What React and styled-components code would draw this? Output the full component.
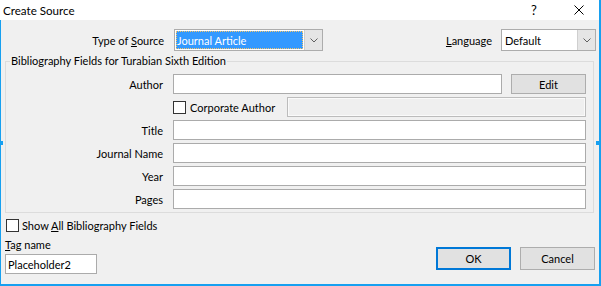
import React from "react";
import styled, { createGlobalStyle } from "styled-components";

const ACCENT = "#17a0f0";
const FONT = `Lato, "Liberation Sans", sans-serif`;

const Global = createGlobalStyle`
  html, body { margin: 0; padding: 0; background: #ffffff; }
  body { font-family: ${FONT}; }
  * { box-sizing: border-box; }
`;

const Window = styled.div`
  position: relative;
  width: 601px;
  height: 286px;
  display: flex;
  flex-direction: column;
  background: #f0f0f0;
  border-right: 2px solid ${ACCENT};
  border-bottom: 2px solid ${ACCENT};
  font-family: ${FONT};
  font-size: 11px;
  color: #000;
`;

const Handle = styled.div`
  position: absolute;
  top: 141px;
  ${(p) => (p.$side === "left" ? "left: 0;" : "right: 0;")}
  width: 3px;
  height: 4px;
  background: ${ACCENT};
`;

const TitleBar = styled.div`
  height: 20px;
  flex: none;
  display: flex;
  align-items: center;
  background: #ffffff;
  padding-left: 3px;
`;

const TitleText = styled.span`
  font-size: 11.6px;
  flex: 1;
`;

const TitleButtons = styled.div`
  display: flex;
  gap: 5px;
  height: 100%;
`;

const TitleButton = styled.div`
  width: 40px;
  height: 100%;
  display: flex;
  align-items: center;
  justify-content: center;
  font-size: 13px;
`;

const Body = styled.div`
  flex: 1;
  display: flex;
  flex-direction: column;
  border-left: 1px solid ${ACCENT};
  padding: 9px 0 10px 0;
`;

const TopRow = styled.div`
  display: flex;
  align-items: center;
  height: 22px;
  padding-right: 3px;
`;

const TypeLabel = styled.span`
  width: 163px;
  text-align: right;
  margin-right: 10px;
`;

const LangLabel = styled.span`
  margin-left: auto;
  margin-right: 9px;
`;

const Combo = styled.div`
  width: ${(p) => p.$w}px;
  height: 22px;
  display: flex;
  border: 1px solid #acacac;
  background: #ffffff;
`;

const ComboField = styled.div`
  flex: 1;
  display: flex;
  align-items: stretch;
  padding: 1px;
`;

const ComboValue = styled.div`
  flex: 1;
  display: flex;
  align-items: center;
  padding-left: ${(p) => (p.$selected ? 1 : 2)}px;
  background: ${(p) => (p.$selected ? "#3399ff" : "transparent")};
  color: ${(p) => (p.$selected ? "#ffffff" : "#000")};
  outline: ${(p) => (p.$selected ? "1px dotted #f5c469" : "none")};
  outline-offset: -1px;
`;

const DropButton = styled.div`
  width: 18px;
  display: flex;
  align-items: center;
  justify-content: center;
  background: #e5e5e5;
  border-left: 1px solid #cfcfcf;
`;

const Chevron = () => (
  <svg width="8" height="5" viewBox="0 0 8 5">
    <path d="M0.5 0.5 L4 4 L7.5 0.5" fill="none" stroke="#606060" strokeWidth="1" />
  </svg>
);

const Group = styled.fieldset`
  margin: 3px 5px 0 4px;
  padding: 6px 7px 3px 0;
  border: 1px solid #dcdcdc;
  min-width: 0;
`;

const Legend = styled.legend`
  margin-left: 4px;
  padding: 0 1px;
  line-height: 14px;
`;

const FieldGrid = styled.div`
  display: grid;
  grid-template-columns: 157px 1fr;
  column-gap: 10px;
  row-gap: 3px;
  grid-auto-rows: 20px;
  align-items: center;
`;

const FieldLabel = styled.span`
  text-align: right;
`;

const TextBox = styled.div`
  height: 20px;
  ${(p) => (p.$w ? `width: ${p.$w}px;` : "flex: 1;")}
  border: 1px solid ${(p) => (p.$disabled ? "#bcbcbc" : "#ababab")};
  background: ${(p) => (p.$disabled ? "#efefef" : "#ffffff")};
  box-shadow: ${(p) => (p.$disabled ? "inset 0 0 0 1px #fafafa" : "none")};
  display: flex;
  align-items: center;
  padding-left: 2px;
`;

const Cell = styled.div`
  display: flex;
  align-items: center;
  height: 20px;
`;

const Button = styled.div`
  width: 75px;
  height: ${(p) => p.$h || 20}px;
  margin-left: ${(p) => p.$ml || 0}px;
  display: flex;
  align-items: center;
  justify-content: center;
  background: #e1e1e1;
  border: ${(p) => (p.$default ? "2px solid #0078d7" : "1px solid #adadad")};
`;

const Check = styled.div`
  width: 13px;
  height: 13px;
  flex: none;
  border: 1px solid #333333;
  background: #ffffff;
  margin-left: ${(p) => p.$ml || 0}px;
`;

const CheckText = styled.span`
  margin-left: ${(p) => p.$ml || 4}px;
`;

const Footer = styled.div`
  margin-top: 6px;
  display: flex;
  justify-content: space-between;
  align-items: flex-end;
  padding: 0 4px 0 4px;
`;

const FooterLeft = styled.div`
  display: flex;
  flex-direction: column;
`;

const CheckRow = styled.div`
  display: flex;
  align-items: center;
  height: 13px;
`;

const TagLabel = styled.span`
  line-height: 14px;
  margin-top: 6px;
`;

const TagBox = styled(TextBox)`
  margin-top: 2px;
`;

const FooterButtons = styled.div`
  display: flex;
  margin-bottom: 4px;
`;

const CloseIcon = () => (
  <svg width="10" height="10" viewBox="0 0 10 10">
    <path d="M0.5 0.5 L9.5 9.5 M9.5 0.5 L0.5 9.5" stroke="#000" strokeWidth="1" />
  </svg>
);

const fields = ["Title", "Journal Name", "Year", "Pages"];

export default function App() {
  return (
    <>
      <Global />
      <Window>
        <Handle $side="left" />
        <Handle $side="right" />
        <TitleBar>
          <TitleText>Create Source</TitleText>
          <TitleButtons>
            <TitleButton>?</TitleButton>
            <TitleButton>
              <CloseIcon />
            </TitleButton>
          </TitleButtons>
        </TitleBar>
        <Body>
          <TopRow>
            <TypeLabel>
              Type of <u>S</u>ource
            </TypeLabel>
            <Combo $w={149}>
              <ComboField>
                <ComboValue $selected>Journal Article</ComboValue>
              </ComboField>
              <DropButton>
                <Chevron />
              </DropButton>
            </Combo>
            <LangLabel>
              <u>L</u>anguage
            </LangLabel>
            <Combo $w={95}>
              <ComboField>
                <ComboValue>Default</ComboValue>
              </ComboField>
              <DropButton>
                <Chevron />
              </DropButton>
            </Combo>
          </TopRow>

          <Group>
            <Legend>Bibliography Fields for Turabian Sixth Edition</Legend>
            <FieldGrid>
              <FieldLabel>Author</FieldLabel>
              <Cell>
                <TextBox />
                <Button $ml={9}>Edit</Button>
              </Cell>
              <span />
              <Cell>
                <Check />
                <CheckText>Corporate Author</CheckText>
                <TextBox $disabled $w={299} style={{ marginLeft: "auto" }} />
              </Cell>
              {fields.map((f) => (
                <React.Fragment key={f}>
                  <FieldLabel>{f}</FieldLabel>
                  <TextBox />
                </React.Fragment>
              ))}
            </FieldGrid>
          </Group>

          <Footer>
            <FooterLeft>
              <CheckRow>
                <Check $ml={1} />
                <CheckText $ml={3}>
                  Show <u>A</u>ll Bibliography Fields
                </CheckText>
              </CheckRow>
              <TagLabel>
                <u>T</u>ag name
              </TagLabel>
              <TagBox $w={92}>Placeholder2</TagBox>
            </FooterLeft>
            <FooterButtons>
              <Button $default $h={23}>OK</Button>
              <Button $h={23} $ml={9}>Cancel</Button>
            </FooterButtons>
          </Footer>
        </Body>
      </Window>
    </>
  );
}
